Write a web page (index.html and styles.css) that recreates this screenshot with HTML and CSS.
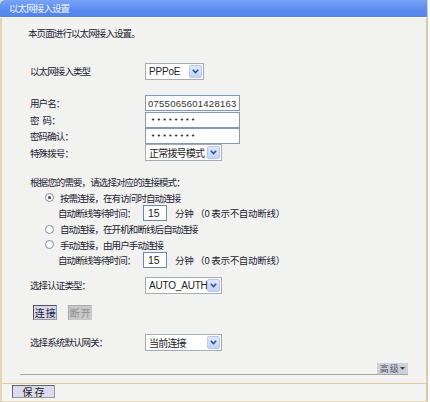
FILE: index.html
```html
<!DOCTYPE html>
<html lang="zh-CN">
<head>
<meta charset="utf-8">
<title>以太网接入设置</title>
<link rel="stylesheet" href="styles.css">
</head>
<body>
<div class="panel">
  <div class="title">以太网接入设置</div>
  <div class="content">
    <div class="intro">本页面进行以太网接入设置。</div>

    <div class="row r-type">
      <span class="label">以太网接入类型</span>
      <span class="select w59"><span class="val latin">PPPoE</span><span class="arrow"><svg width="7" height="5" viewBox="0 0 7 5"><path d="M0.8 0.8 L3.5 3.6 L6.2 0.8" fill="none" stroke="#2d4d9a" stroke-width="1.5"/></svg></span></span>
    </div>

    <div class="row r-user">
      <span class="label">用户名：</span>
      <span class="input w95 digits">0755065601428163</span>
    </div>
    <div class="row r-pwd">
      <span class="label">密<span class="gap"></span>码：</span>
      <span class="input w95 dots">••••••••</span>
    </div>
    <div class="row r-confirm">
      <span class="label">密码确认：</span>
      <span class="input w95 dots">••••••••</span>
    </div>
    <div class="row r-special">
      <span class="label">特殊拨号：</span>
      <span class="select w77"><span class="val cjk">正常拨号模式</span><span class="arrow"><svg width="7" height="5" viewBox="0 0 7 5"><path d="M0.8 0.8 L3.5 3.6 L6.2 0.8" fill="none" stroke="#2d4d9a" stroke-width="1.5"/></svg></span></span>
    </div>

    <div class="mode">根据您的需要，请选择对应的连接模式：</div>

    <div class="radio-row r1"><span class="radio checked"></span><span>按需连接，在有访问时自动连接</span></div>
    <div class="wait-row w1"><span class="wait-label">自动断线等待时间：</span><span class="small-input">15</span><span class="unit">分钟 （0 表示不自动断线）</span></div>
    <div class="radio-row r2"><span class="radio"></span><span>自动连接，在开机和断线后自动连接</span></div>
    <div class="radio-row r3"><span class="radio"></span><span>手动连接，由用户手动连接</span></div>
    <div class="wait-row w2"><span class="wait-label">自动断线等待时间：</span><span class="small-input">15</span><span class="unit">分钟 （0 表示不自动断线）</span></div>

    <div class="row r-auth">
      <span class="label">选择认证类型：</span>
      <span class="select w77"><span class="val latin">AUTO_AUTH</span><span class="arrow"><svg width="7" height="5" viewBox="0 0 7 5"><path d="M0.8 0.8 L3.5 3.6 L6.2 0.8" fill="none" stroke="#2d4d9a" stroke-width="1.5"/></svg></span></span>
    </div>

    <div class="btn-row">
      <span class="btn">连 接</span>
      <span class="btn disabled">断 开</span>
    </div>

    <div class="row r-gw">
      <span class="label">选择系统默认网关：</span>
      <span class="select w77"><span class="val cjk">当前连接</span><span class="arrow"><svg width="7" height="5" viewBox="0 0 7 5"><path d="M0.8 0.8 L3.5 3.6 L6.2 0.8" fill="none" stroke="#2d4d9a" stroke-width="1.5"/></svg></span></span>
    </div>

    <div class="adv-row"><span class="adv">高 级<svg width="5" height="3" viewBox="0 0 5 3"><path d="M0 0 H5 L2.5 3 Z" fill="#444"/></svg></span></div>
    <div class="rule"></div>
  </div>
  <div class="footer"><span class="save">保 存</span></div>
</div>
</body>
</html>
```
FILE: styles.css
```css
html, body {
  margin: 0;
  padding: 0;
  background: #ffffff;
}
body {
  width: 430px;
  height: 402px;
  overflow: hidden;
  font-family: "Noto Sans CJK SC", "Liberation Sans", sans-serif;
  font-size: 9.5px;
  letter-spacing: -0.9px;
  color: #222230;
}
.panel {
  width: 428px;
  height: 402px;
  box-sizing: border-box;
  border-left: 2px solid #e4d6b0;
  border-right: 2px solid #d9cba4;
  background: #f2f2f0;
  display: flex;
  flex-direction: column;
}
.title {
  height: 17px;
  line-height: 17px;
  margin-left: -2px;
  margin-right: -1px;
  padding-left: 9px;
  color: #eef3ff;
  background: linear-gradient(#79a3f6, #5a8bef 60%, #5284ec);
  border-top-left-radius: 5px;
  border-bottom: 1px solid #f8f6ee;
}
.content {
  flex: 1;
  padding-left: 28px;
  display: flex;
  flex-direction: column;
}
.intro {
  margin-top: 7px;
  margin-left: -2px;
  height: 16px;
  line-height: 16px;
}
.row {
  display: flex;
  align-items: center;
}
.label {
  width: 115px;
  flex: none;
}
.gap {
  display: inline-block;
  width: 4px;
}
.r-type { margin-top: 21px; height: 18px; }
.r-user { margin-top: 15px; height: 16px; }
.r-pwd { margin-top: 1px; height: 16px; }
.r-confirm { height: 16px; }
.r-special { height: 17px; }
.r-auth { margin-top: 8px; height: 18px; }
.r-gw { margin-top: 13px; height: 18px; }

.input {
  box-sizing: border-box;
  height: 16px;
  border: 1px solid #7f9db9;
  background: #ffffff;
  padding-left: 3px;
  display: flex;
  align-items: center;
  overflow: hidden;
  white-space: nowrap;
}
.w95 { width: 95px; }
.digits {
  font-family: "Liberation Sans", sans-serif;
  font-size: 9.5px;
  letter-spacing: 0.25px;
  padding-left: 2px;
  color: #333;
}
.dots {
  font-family: "DejaVu Sans", sans-serif;
  font-size: 7px;
  letter-spacing: 1.6px;
  color: #222;
  padding-left: 5px;
}
.select {
  box-sizing: border-box;
  height: 17px;
  border: 1px solid #a5acb5;
  background: #ffffff;
  display: flex;
  align-items: center;
  padding-left: 3px;
}
.w59 { width: 59px; }
.w77 { width: 77px; }
.val { flex: 1; white-space: nowrap; overflow: hidden; }
.latin {
  font-family: "Liberation Sans", sans-serif;
  font-size: 10px;
  letter-spacing: -0.2px;
  color: #222;
}
.cjk {
  font-size: 10px;
  letter-spacing: -0.8px;
  color: #222;
}
.arrow {
  width: 13px;
  height: 13px;
  flex: none;
  margin-right: 1px;
  box-sizing: border-box;
  border: 1px solid #b9c8f0;
  border-radius: 2px;
  background: linear-gradient(#e0e8fd, #c3d3fa);
  display: flex;
  align-items: center;
  justify-content: center;
}

.mode {
  margin-top: 13px;
  height: 16px;
  line-height: 16px;
}
.radio-row {
  display: flex;
  align-items: center;
  padding-left: 15px;
}
.r1 { height: 15px; }
.r2 { height: 16px; }
.r3 { height: 15px; }
.radio {
  width: 9px;
  height: 9px;
  box-sizing: border-box;
  border: 1px solid #7c8a99;
  border-radius: 50%;
  background: #ffffff;
  margin-right: 6px;
  position: relative;
  flex: none;
}
.radio.checked::after {
  content: "";
  position: absolute;
  left: 2px;
  top: 2px;
  width: 3px;
  height: 3px;
  border-radius: 50%;
  background: #3c4a3c;
}
.wait-row {
  display: flex;
  align-items: center;
  height: 16px;
  padding-left: 28px;
}
.wait-label { width: 85px; flex: none; }
.small-input {
  box-sizing: border-box;
  width: 24px;
  height: 16px;
  border: 1px solid #6f8aa8;
  background: #ffffff;
  font-family: "Liberation Sans", sans-serif;
  font-size: 10.5px;
  letter-spacing: 0;
  padding-left: 4px;
  line-height: 14px;
  color: #222;
  margin-right: 8px;
}
.unit {
  letter-spacing: -0.3px;
  white-space: pre;
}

.btn-row {
  margin-top: 11px;
  height: 15px;
  display: flex;
  gap: 11px;
  padding-left: 3px;
}
.btn {
  box-sizing: border-box;
  width: 24px;
  height: 15px;
  line-height: 13px;
  text-align: center;
  font-size: 10px;
  letter-spacing: -0.5px;
  border: 1px solid;
  border-color: #555 #999 #999 #555;
  background: #d4d6ea;
  color: #1e2440;
}
.btn.disabled {
  border-color: #aaa #c8c8c8 #c8c8c8 #aaa;
  background: #c9c9c9;
  color: #8e8e8e;
}

.adv-row {
  margin-top: 12px;
  height: 11px;
  display: flex;
  justify-content: flex-end;
  margin-right: 18px;
}
.adv {
  box-sizing: border-box;
  width: 31px;
  height: 11px;
  line-height: 11px;
  background: #cdd1dc;
  color: #556;
  font-size: 9px;
  letter-spacing: -0.5px;
  display: flex;
  align-items: center;
  justify-content: center;
  gap: 2px;
}
.rule {
  height: 1px;
  background: #a6a6a6;
  margin-left: -10px;
  margin-right: 18px;
}
.footer {
  height: 19px;
  box-sizing: border-box;
  border-top: 1px solid #dccca0;
  border-bottom: 1px solid #e2d6b4;
  background: #f4f4f2;
  padding-left: 10px;
  padding-top: 1px;
}
.save {
  display: block;
  box-sizing: border-box;
  width: 43px;
  height: 13px;
  line-height: 11px;
  text-align: center;
  font-size: 10px;
  letter-spacing: 0;
  border: 1px solid;
  border-color: #666 #999 #999 #666;
  background: #dcdcee;
  color: #222;
}
```
